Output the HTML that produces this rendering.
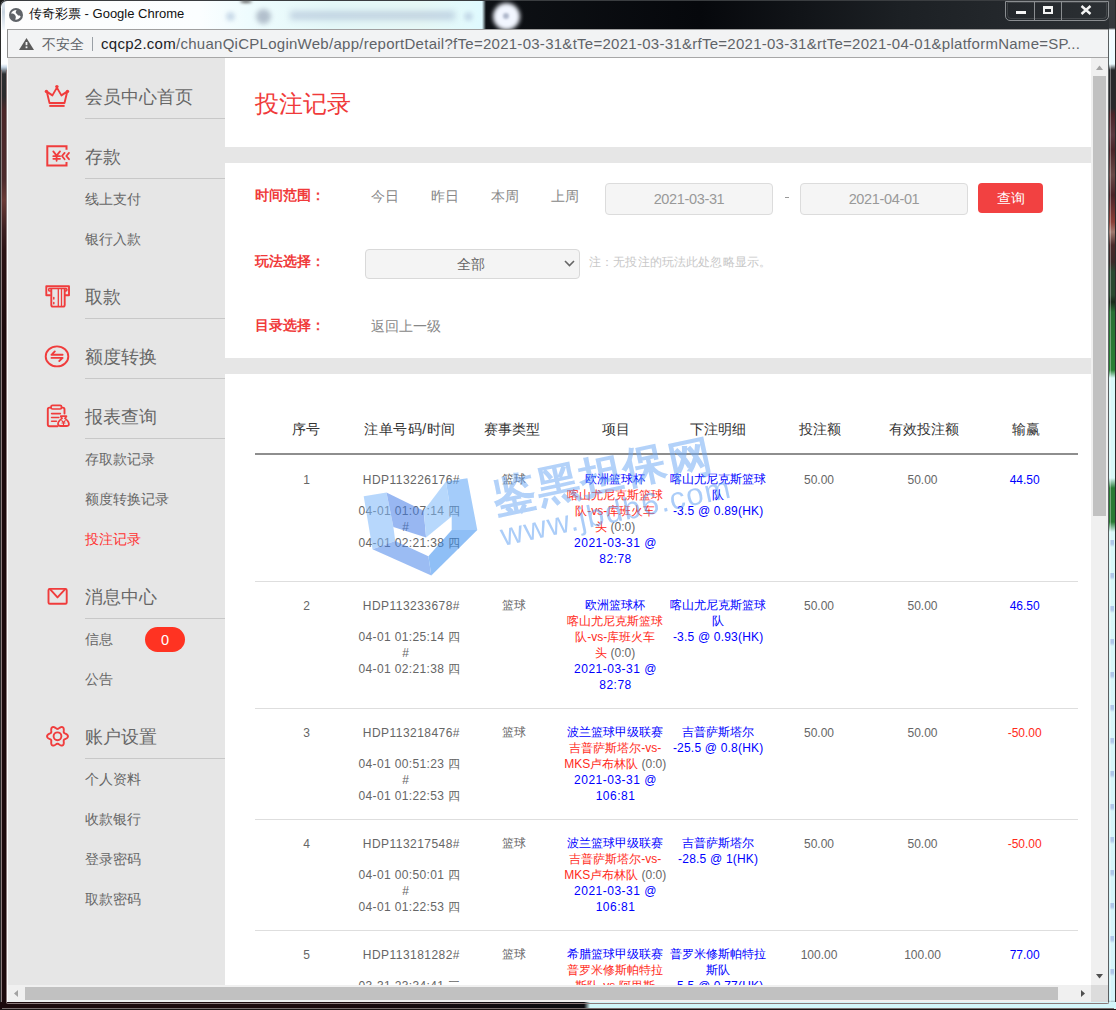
<!DOCTYPE html>
<html><head><meta charset="utf-8">
<style>
*{margin:0;padding:0;box-sizing:border-box}
html,body{width:1116px;height:1010px;overflow:hidden;background:#1a0c0c;font-family:"Liberation Sans",sans-serif}
.a{position:absolute;white-space:nowrap}
#titlebar{position:absolute;left:0;top:0;width:1116px;height:30px;overflow:hidden;background:linear-gradient(90deg,#fdfdfd 0,#fbfeff 200px,#eefcfe 250px,#e4f8f8 330px,#e6f8f6 420px,#e2fafd 470px,#dffaff 482px,#0e1115 486px,#06080c 700px,#1c2024 900px,#2c3034 1116px)}
#addr{position:absolute;left:7px;top:29px;width:1102px;height:29px;background:#f2f3f4;border-top:1px solid #a0a0a0;border-bottom:1px solid #a7a7a7;border-left:1px solid #8c8c8c}
#side{position:absolute;left:8px;top:58px;width:217px;height:927px;background:#e6e6e6}
#main{position:absolute;left:225px;top:58px;width:866px;height:927px;background:#fff;overflow:hidden}
.band{position:absolute;left:0;width:866px;height:16px;background:#e6e6e6}
.mi{position:absolute;left:77px;font-size:18px;color:#666;line-height:20px}
.sep{position:absolute;left:77px;width:140px;height:1px;background:#c8c8c8}
.si{position:absolute;left:77px;font-size:14px;color:#666;line-height:16px}
.lbl{font-size:14px;line-height:16px;color:#f03a3a;font-weight:bold}
.opt{font-size:14px;line-height:16px;color:#888}
.inp{width:168px;height:32px;border:1px solid #dcdcdc;border-radius:4px;background:#f5f5f5;font-size:14.5px;line-height:30px;color:#999;text-align:center;letter-spacing:-0.35px}
.th{top:421px;width:100px;text-align:center;font-size:14px;line-height:16px;color:#333}
.td{width:120px;text-align:center;font-size:12px;line-height:16px;color:#666}
.b{color:#0000ff}.r{color:#ff2a1a}.g{color:#666}
</style></head><body>
<div id="titlebar">
  <div class="a" style="left:0;top:0;width:1116px;height:1px;background:#3a3d40"></div>
  <div class="a" style="left:256px;top:9px;width:15px;height:15px;border-radius:50%;background:#8c98ac;filter:blur(2.5px);opacity:.6"></div>
  <div class="a" style="left:290px;top:11px;width:165px;height:9px;background:#9fb0cc;filter:blur(3px);opacity:.5"></div>
  <div class="a" style="left:226px;top:12px;width:9px;height:9px;border-radius:50%;background:#b8cce0;filter:blur(2px);opacity:.7"></div>
  <div class="a" style="left:464px;top:12px;width:9px;height:9px;border-radius:50%;background:#b8cce0;filter:blur(2px);opacity:.7"></div>
  <div class="a" style="left:240px;top:0;width:12px;height:3px;border-radius:50%;background:#555;filter:blur(1.5px)"></div>
  <div class="a" style="left:493px;top:3px;width:27px;height:27px;border-radius:50%;background:#f2f6ff;filter:blur(2.2px)"></div>
  <div class="a" style="left:503px;top:13px;width:6px;height:6px;border-radius:50%;background:#b0b8cc;filter:blur(1px)"></div>
  <svg class="a" style="left:8px;top:7px" width="16" height="16" viewBox="0 0 16 16"><circle cx="8" cy="8" r="7" fill="#5f6368"/><path d="M8.6 3 C6 3.2 3.6 4.6 3 6.6 C4.5 6.4 6 6.9 7 8 C8 9.2 8.2 10.4 7.2 12.6 C9.2 12.8 11.2 11.8 12.6 10 C12.8 9 11.5 8.2 10.2 8.6 C9.5 8 9.2 7 8.4 6.6 C7.6 6.2 7.4 5 8.6 3 Z" fill="#fff"/></svg>
  <div class="a" style="left:29px;top:6px;font-size:13px;line-height:16px;color:#111">传奇彩票 - Google Chrome</div>
  <div class="a" style="left:1005px;top:1px;width:104px;height:20px;border:1px solid #8a8d90;border-radius:0 0 5px 5px"></div><div class="a" style="left:1007px;top:2px;width:100px;height:17px;border:1px solid rgba(255,255,255,.12);border-radius:0 0 4px 4px"></div>
  <div class="a" style="left:1034px;top:1px;width:1px;height:19px;background:#8a8d90"></div>
  <div class="a" style="left:1061px;top:1px;width:1px;height:19px;background:#8a8d90"></div>
  <div class="a" style="left:1016px;top:11px;width:10px;height:3px;background:#f4f4f4"></div>
  <div class="a" style="left:1043px;top:6px;width:10px;height:8px;border:2px solid #f4f4f4;border-top-width:3px"></div>
  <svg class="a" style="left:1080px;top:5px" width="12" height="10" viewBox="0 0 12 10"><path d="M1.5 1 L10.5 9 M10.5 1 L1.5 9" stroke="#f4f4f4" stroke-width="2.4"/></svg>
</div>
<div id="addr">
  <svg class="a" style="left:11px;top:8px" width="15" height="12" viewBox="0 0 15 12"><path d="M7.5 0 L15 12 L0 12 Z" fill="#5a5a5a"/><rect x="6.6" y="4" width="1.8" height="3.2" fill="#f2f3f4"/><rect x="6.6" y="8.4" width="1.8" height="1.8" fill="#f2f3f4"/></svg>
  <div class="a" style="left:34px;top:6px;font-size:14px;line-height:16px;color:#5f6368">不安全</div>
  <div class="a" style="left:84px;top:7px;width:1px;height:14px;background:#9aa0a6"></div>
  <div class="a" style="left:93px;top:5px;font-size:15px;line-height:18px;color:#5f6368;letter-spacing:0.27px"><span style="color:#202124">cqcp2.com</span>/chuanQiCPLoginWeb/app/reportDetail?fTe=2021-03-31&amp;tTe=2021-03-31&amp;rfTe=2021-03-31&amp;rtTe=2021-04-01&amp;platformName=SP...</div>
</div>
<div id="side">
  <div class="mi" style="top:29px">会员中心首页</div>
  <div class="sep" style="top:60px"></div>
  <div class="mi" style="top:89px">存款</div>
  <div class="sep" style="top:120px"></div>
  <div class="si" style="top:133px">线上支付</div>
  <div class="si" style="top:173px">银行入款</div>
  <div class="mi" style="top:229px">取款</div>
  <div class="sep" style="top:260px"></div>
  <div class="mi" style="top:289px">额度转换</div>
  <div class="sep" style="top:320px"></div>
  <div class="mi" style="top:349px">报表查询</div>
  <div class="sep" style="top:380px"></div>
  <div class="si" style="top:393px">存取款记录</div>
  <div class="si" style="top:433px">额度转换记录</div>
  <div class="si" style="top:473px;color:#f33">投注记录</div>
  <div class="mi" style="top:529px">消息中心</div>
  <div class="sep" style="top:560px"></div>
  <div class="si" style="top:573px">信息</div>
  <div class="si" style="top:613px">公告</div>
  <div class="mi" style="top:669px">账户设置</div>
  <div class="sep" style="top:700px"></div>
  <div class="si" style="top:713px">个人资料</div>
  <div class="si" style="top:753px">收款银行</div>
  <div class="si" style="top:793px">登录密码</div>
  <div class="si" style="top:833px">取款密码</div>
</div>
<!--ICONS-->
<svg class="a" style="left:0;top:0" width="225" height="985">
<g fill="none" stroke="#f03c3c" stroke-width="1.9" stroke-linejoin="round" stroke-linecap="round">
 <!-- crown -->
 <path d="M47 92.5 L49.5 103 L64.5 103 L67 92.5 M46.8 91.6 L52.4 95.4 L56.9 87.6 L61.4 95.4 L67.1 91.6"/>
 <!-- deposit -->
 <path d="M66.5 149.8 L66.5 146.3 L47.3 146.3 L47.3 165.5 L66.5 165.5 L66.5 162" stroke-width="2" stroke-linecap="butt" stroke-linejoin="miter"/>
 <path d="M53.3 151.4 L56.6 155.6 L60 151.4 M56.6 155.6 L56.6 160.8 M53.3 156.2 L60 156.2 M53.3 158.8 L60 158.8" stroke-width="1.8"/>
 <path d="M64.6 152.9 L62 156 L64.6 159.2 M69 152.9 L66.3 156 L69 159.2" stroke-width="1.8"/>
 <!-- withdraw atm -->
 <path d="M50 295.3 L46.3 295.3 L46.3 286.3 L69 286.3 L69 295.3 L65.2 295.3" stroke-width="1.9"/>
 <path d="M50.5 291 L49.5 291 Q48.6 291 48.6 289.7 Q48.6 288.6 49.6 288.6 L65.8 288.6 Q67 288.6 67 289.7 Q67 291 65.8 291 L65 291" stroke-width="1.5"/>
 <path d="M51.3 289 L51.3 305 Q51.3 306.6 53 306.6 L63 306.6 Q64.7 306.6 64.7 305 L64.7 289" stroke-width="1.9"/>
 <path d="M58.3 289.5 L58.3 306 M61.5 289.5 L61.5 306" stroke-width="1.3"/>
 <path d="M53.8 297.6 L53.8 299 M53.8 302.4 L53.8 303.8" stroke-width="1.5"/>
 <!-- transfer -->
 <ellipse cx="57" cy="356.4" rx="11.3" ry="10"/>
 <path d="M51.5 354.8 L62.6 354.8 M51.5 354.8 L54.8 351.4 M51.5 357.9 L62.6 357.9 L59.3 361" stroke-width="1.9"/>
 <!-- report -->
 <path d="M50.8 407.6 L49.5 407.6 Q47.8 407.6 47.8 409.4 L47.8 424.6 Q47.8 426.2 49.5 426.2 L57.5 426.2 M64.5 413.5 L64.5 409.4 Q64.5 407.6 62.8 407.6 L61.6 407.6" stroke-width="1.9"/>
 <rect x="51" y="405.4" width="10.6" height="3.6" rx="1.6" stroke-width="1.7"/>
 <path d="M51.6 413.6 L60.4 413.6 M51.6 417.5 L58.8 417.5 M51.6 421.2 L56.4 421.2" stroke-width="1.6"/>
 <path d="M60.8 416.2 L62 418.4 Q57.8 421.5 58 424.2 Q58.3 426 60.5 426 L66.5 426 Q68.8 426 68.9 424.2 Q69 421.5 65 418.4 L66.4 416.2 Z" stroke-width="1.8"/>
 <path d="M61.8 420.6 L63.5 422.4 L65.2 420.6 M63.5 422.4 L63.5 424.6 M62 423 L65 423" stroke-width="1.2"/>
 <!-- mail -->
 <rect x="48.5" y="588.9" width="18.2" height="14.9" rx="1.3" stroke-width="1.9"/>
 <path d="M50 589.2 L57.5 597.4 L65.2 589.2" stroke-width="1.9"/>
 <!-- gear -->
 <path d="M67.95,736.30 L67.91,736.66 L67.79,737.02 L67.60,737.36 L67.34,737.68 L67.03,737.98 L66.67,738.25 L66.29,738.49 L65.90,738.71 L65.51,738.90 L65.14,739.08 L64.79,739.25 L64.48,739.41 L64.23,739.58 L64.02,739.77 L63.87,739.97 L63.76,740.21 L63.70,740.49 L63.69,740.79 L63.70,741.14 L63.72,741.52 L63.76,741.93 L63.79,742.37 L63.80,742.82 L63.78,743.27 L63.72,743.71 L63.62,744.13 L63.47,744.51 L63.27,744.85 L63.02,745.13 L62.73,745.35 L62.39,745.50 L62.02,745.57 L61.63,745.58 L61.22,745.51 L60.81,745.39 L60.40,745.22 L60.00,745.01 L59.61,744.78 L59.25,744.54 L58.91,744.30 L58.59,744.09 L58.30,743.90 L58.02,743.77 L57.76,743.68 L57.50,743.65 L57.24,743.68 L56.98,743.77 L56.70,743.90 L56.41,744.09 L56.09,744.30 L55.75,744.54 L55.39,744.78 L55.00,745.01 L54.60,745.22 L54.19,745.39 L53.78,745.51 L53.37,745.58 L52.98,745.57 L52.61,745.50 L52.28,745.35 L51.98,745.13 L51.73,744.85 L51.53,744.51 L51.38,744.13 L51.28,743.71 L51.22,743.27 L51.20,742.82 L51.21,742.37 L51.24,741.93 L51.28,741.52 L51.30,741.14 L51.31,740.79 L51.30,740.49 L51.24,740.21 L51.13,739.97 L50.98,739.77 L50.77,739.58 L50.52,739.41 L50.21,739.25 L49.86,739.08 L49.49,738.90 L49.10,738.71 L48.71,738.49 L48.33,738.25 L47.97,737.98 L47.66,737.68 L47.40,737.36 L47.21,737.02 L47.09,736.66 L47.05,736.30 L47.09,735.94 L47.21,735.58 L47.40,735.24 L47.66,734.92 L47.97,734.62 L48.33,734.35 L48.71,734.11 L49.10,733.89 L49.49,733.70 L49.86,733.52 L50.21,733.35 L50.52,733.19 L50.77,733.02 L50.98,732.83 L51.13,732.62 L51.24,732.39 L51.30,732.11 L51.31,731.81 L51.30,731.46 L51.28,731.08 L51.24,730.67 L51.21,730.23 L51.20,729.78 L51.22,729.33 L51.28,728.89 L51.38,728.47 L51.53,728.09 L51.73,727.75 L51.98,727.47 L52.27,727.25 L52.61,727.10 L52.98,727.03 L53.37,727.02 L53.78,727.09 L54.19,727.21 L54.60,727.38 L55.00,727.59 L55.39,727.82 L55.75,728.06 L56.09,728.30 L56.41,728.51 L56.70,728.70 L56.98,728.83 L57.24,728.92 L57.50,728.95 L57.76,728.92 L58.02,728.83 L58.30,728.70 L58.59,728.51 L58.91,728.30 L59.25,728.06 L59.61,727.82 L60.00,727.59 L60.40,727.38 L60.81,727.21 L61.22,727.09 L61.63,727.02 L62.02,727.03 L62.39,727.10 L62.73,727.25 L63.02,727.47 L63.27,727.75 L63.47,728.09 L63.62,728.47 L63.72,728.89 L63.78,729.33 L63.80,729.78 L63.79,730.23 L63.76,730.67 L63.72,731.08 L63.70,731.46 L63.69,731.81 L63.70,732.11 L63.76,732.39 L63.87,732.62 L64.02,732.83 L64.23,733.02 L64.48,733.19 L64.79,733.35 L65.14,733.52 L65.51,733.70 L65.90,733.89 L66.29,734.11 L66.67,734.35 L67.03,734.62 L67.34,734.92 L67.60,735.24 L67.79,735.58 L67.91,735.94 L67.95,736.30 Z" stroke-width="1.9"/>
 <circle cx="57.5" cy="736.3" r="3.9" stroke-width="1.9"/>
</g>
<circle cx="56.9" cy="86.6" r="1.7" fill="#f03c3c"/>
<circle cx="46.4" cy="91.4" r="1.7" fill="#f03c3c"/>
<circle cx="67.5" cy="91.4" r="1.7" fill="#f03c3c"/>
<rect x="49.3" y="104.9" width="15.3" height="2" fill="#f03c3c"/>
<rect x="145" y="627" width="40" height="25" rx="12.5" fill="#ff3322"/>
<text x="165" y="645" text-anchor="middle" font-size="14.5" fill="#fff" font-family="Liberation Sans, sans-serif">0</text>
</svg>
<!--/ICONS-->
<div id="main">
  <div class="band" style="top:89px"></div>
  <div class="band" style="top:300px"></div>
</div>
<div id="pg" style="position:absolute;left:0;top:0;width:1091px;height:985px;overflow:hidden">
  <div class="a" style="left:255px;top:90px;font-size:24px;line-height:28px;color:#f03a3a">投注记录</div>
  <div class="a lbl" style="left:255px;top:187px">时间范围：</div>
  <div class="a opt" style="left:371px;top:188px">今日</div>
  <div class="a opt" style="left:431px;top:188px">昨日</div>
  <div class="a opt" style="left:491px;top:188px">本周</div>
  <div class="a opt" style="left:551px;top:188px">上周</div>
  <div class="a inp" style="left:605px;top:183px">2021-03-31</div>
  <div class="a" style="left:785px;top:190px;width:4px;height:1px;background:#999;top:197px"></div>
  <div class="a inp" style="left:800px;top:183px">2021-04-01</div>
  <div class="a" style="left:978px;top:183px;width:65px;height:30px;background:#f24141;border-radius:4px;color:#fff;font-size:14px;line-height:30px;text-align:center">查询</div>
  <div class="a lbl" style="left:255px;top:253px">玩法选择：</div>
  <div class="a" style="left:365px;top:249px;width:215px;height:30px;border:1px solid #d9d9d9;border-radius:4px;background:#f4f4f4;font-size:14px;line-height:28px;color:#666;text-align:center;padding-right:4px">全部</div>
  <svg class="a" style="left:564px;top:260px" width="11" height="7" viewBox="0 0 11 7"><path d="M1 1 L5.5 5.5 L10 1" fill="none" stroke="#666" stroke-width="1.6"/></svg>
  <div class="a" style="left:589px;top:254px;font-size:12px;line-height:16px;color:#c8c8c8;letter-spacing:0.15px">注：无投注的玩法此处忽略显示。</div>
  <div class="a lbl" style="left:255px;top:317px">目录选择：</div>
  <div class="a opt" style="left:371px;top:318px">返回上一级</div>
  <div class="a" style="left:255px;top:453px;width:823px;height:2px;background:#8e8e8e"></div>
  <div class="a th" style="left:256px">序号</div>
  <div class="a th" style="left:360px;letter-spacing:0.45px">注单号码/时间</div>
  <div class="a th" style="left:462px">赛事类型</div>
  <div class="a th" style="left:566px">项目</div>
  <div class="a th" style="left:668px">下注明细</div>
  <div class="a th" style="left:770px">投注额</div>
  <div class="a th" style="left:874px">有效投注额</div>
  <div class="a th" style="left:976px">输赢</div>
<!--TBL-->
<div class="a td" style="left:246.5px;top:472px">1</div>
<div class="a td" style="left:351.4px;top:472px;letter-spacing:0.45px">HDP113226176#</div>
<div class="a td" style="left:349.4px;top:503px;letter-spacing:0.35px">04-01 01:07:14 四</div>
<div class="a td" style="left:345.7px;top:519px">#</div>
<div class="a td" style="left:349.4px;top:535px;letter-spacing:0.35px">04-01 02:21:38 四</div>
<div class="a td" style="left:453.6px;top:471px">篮球</div>
<div class="a td" style="left:555.2px;top:471px"><span class="b">欧洲篮球杯</span></div>
<div class="a td" style="left:555.2px;top:487px"><span class="r">喀山尤尼克斯篮球</span></div>
<div class="a td" style="left:555.2px;top:503px"><span class="r">队-vs-库班火车</span></div>
<div class="a td" style="left:555.2px;top:519px"><span class="r">头</span> (0:0)</div>
<div class="a td" style="left:555.5px;top:535px;letter-spacing:0.5px"><span class="b">2021-03-31 @</span></div>
<div class="a td" style="left:555.5px;top:551px;letter-spacing:0.5px"><span class="b">82:78</span></div>
<div class="a td" style="left:658.1px;top:471px"><span class="b">喀山尤尼克斯篮球</span></div>
<div class="a td" style="left:658.1px;top:487px"><span class="b">队</span></div>
<div class="a td" style="left:658.2px;top:503px;letter-spacing:0.2px"><span class="b">-3.5 @ 0.89(HK)</span></div>
<div class="a td" style="left:759.0px;top:472px">50.00</div>
<div class="a td" style="left:862.5px;top:472px">50.00</div>
<div class="a td" style="left:964.7px;top:472px"><span class="b">44.50</span></div>
<div class="a td" style="left:246.5px;top:598px">2</div>
<div class="a td" style="left:351.4px;top:598px;letter-spacing:0.45px">HDP113233678#</div>
<div class="a td" style="left:349.4px;top:629px;letter-spacing:0.35px">04-01 01:25:14 四</div>
<div class="a td" style="left:345.7px;top:645px">#</div>
<div class="a td" style="left:349.4px;top:661px;letter-spacing:0.35px">04-01 02:21:38 四</div>
<div class="a td" style="left:453.6px;top:597px">篮球</div>
<div class="a td" style="left:555.2px;top:597px"><span class="b">欧洲篮球杯</span></div>
<div class="a td" style="left:555.2px;top:613px"><span class="r">喀山尤尼克斯篮球</span></div>
<div class="a td" style="left:555.2px;top:629px"><span class="r">队-vs-库班火车</span></div>
<div class="a td" style="left:555.2px;top:645px"><span class="r">头</span> (0:0)</div>
<div class="a td" style="left:555.5px;top:661px;letter-spacing:0.5px"><span class="b">2021-03-31 @</span></div>
<div class="a td" style="left:555.5px;top:677px;letter-spacing:0.5px"><span class="b">82:78</span></div>
<div class="a td" style="left:658.1px;top:597px"><span class="b">喀山尤尼克斯篮球</span></div>
<div class="a td" style="left:658.1px;top:613px"><span class="b">队</span></div>
<div class="a td" style="left:658.2px;top:629px;letter-spacing:0.2px"><span class="b">-3.5 @ 0.93(HK)</span></div>
<div class="a td" style="left:759.0px;top:598px">50.00</div>
<div class="a td" style="left:862.5px;top:598px">50.00</div>
<div class="a td" style="left:964.7px;top:598px"><span class="b">46.50</span></div>
<div class="a td" style="left:246.5px;top:725px">3</div>
<div class="a td" style="left:351.4px;top:725px;letter-spacing:0.45px">HDP113218476#</div>
<div class="a td" style="left:349.4px;top:756px;letter-spacing:0.35px">04-01 00:51:23 四</div>
<div class="a td" style="left:345.7px;top:772px">#</div>
<div class="a td" style="left:349.4px;top:788px;letter-spacing:0.35px">04-01 01:22:53 四</div>
<div class="a td" style="left:453.6px;top:724px">篮球</div>
<div class="a td" style="left:555.2px;top:724px"><span class="b">波兰篮球甲级联赛</span></div>
<div class="a td" style="left:555.2px;top:740px"><span class="r">吉普萨斯塔尔-vs-</span></div>
<div class="a td" style="left:555.2px;top:756px"><span class="r">MKS卢布林队</span> (0:0)</div>
<div class="a td" style="left:555.5px;top:772px;letter-spacing:0.5px"><span class="b">2021-03-31 @</span></div>
<div class="a td" style="left:555.5px;top:788px;letter-spacing:0.5px"><span class="b">106:81</span></div>
<div class="a td" style="left:658.1px;top:724px"><span class="b">吉普萨斯塔尔</span></div>
<div class="a td" style="left:658.2px;top:740px;letter-spacing:0.2px"><span class="b">-25.5 @ 0.8(HK)</span></div>
<div class="a td" style="left:759.0px;top:725px">50.00</div>
<div class="a td" style="left:862.5px;top:725px">50.00</div>
<div class="a td" style="left:964.7px;top:725px"><span class="r">-50.00</span></div>
<div class="a td" style="left:246.5px;top:836px">4</div>
<div class="a td" style="left:351.4px;top:836px;letter-spacing:0.45px">HDP113217548#</div>
<div class="a td" style="left:349.4px;top:867px;letter-spacing:0.35px">04-01 00:50:01 四</div>
<div class="a td" style="left:345.7px;top:883px">#</div>
<div class="a td" style="left:349.4px;top:899px;letter-spacing:0.35px">04-01 01:22:53 四</div>
<div class="a td" style="left:453.6px;top:835px">篮球</div>
<div class="a td" style="left:555.2px;top:835px"><span class="b">波兰篮球甲级联赛</span></div>
<div class="a td" style="left:555.2px;top:851px"><span class="r">吉普萨斯塔尔-vs-</span></div>
<div class="a td" style="left:555.2px;top:867px"><span class="r">MKS卢布林队</span> (0:0)</div>
<div class="a td" style="left:555.5px;top:883px;letter-spacing:0.5px"><span class="b">2021-03-31 @</span></div>
<div class="a td" style="left:555.5px;top:899px;letter-spacing:0.5px"><span class="b">106:81</span></div>
<div class="a td" style="left:658.1px;top:835px"><span class="b">吉普萨斯塔尔</span></div>
<div class="a td" style="left:658.2px;top:851px;letter-spacing:0.2px"><span class="b">-28.5 @ 1(HK)</span></div>
<div class="a td" style="left:759.0px;top:836px">50.00</div>
<div class="a td" style="left:862.5px;top:836px">50.00</div>
<div class="a td" style="left:964.7px;top:836px"><span class="r">-50.00</span></div>
<div class="a td" style="left:246.5px;top:947px">5</div>
<div class="a td" style="left:351.4px;top:947px;letter-spacing:0.45px">HDP113181282#</div>
<div class="a td" style="left:349.4px;top:978px;letter-spacing:0.35px">03-31 23:34:41 三</div>
<div class="a td" style="left:345.7px;top:994px">#</div>
<div class="a td" style="left:349.4px;top:1010px;letter-spacing:0.35px">03-31 23:44:41 三</div>
<div class="a td" style="left:453.6px;top:946px">篮球</div>
<div class="a td" style="left:555.2px;top:946px"><span class="b">希腊篮球甲级联赛</span></div>
<div class="a td" style="left:555.2px;top:962px"><span class="r">普罗米修斯帕特拉</span></div>
<div class="a td" style="left:555.2px;top:978px"><span class="r">斯队-vs-阿里斯</span></div>
<div class="a td" style="left:555.5px;top:994px;letter-spacing:0.5px"><span class="b">2021-03-31 @</span></div>
<div class="a td" style="left:658.1px;top:946px"><span class="b">普罗米修斯帕特拉</span></div>
<div class="a td" style="left:658.1px;top:962px"><span class="b">斯队</span></div>
<div class="a td" style="left:658.2px;top:978px;letter-spacing:0.2px"><span class="b">-5.5 @ 0.77(HK)</span></div>
<div class="a td" style="left:759.0px;top:947px">100.00</div>
<div class="a td" style="left:862.5px;top:947px">100.00</div>
<div class="a td" style="left:964.7px;top:947px"><span class="b">77.00</span></div>
<div class="a" style="left:255px;top:581px;width:823px;height:1px;background:#dedede"></div>
<div class="a" style="left:255px;top:708px;width:823px;height:1px;background:#dedede"></div>
<div class="a" style="left:255px;top:819px;width:823px;height:1px;background:#dedede"></div>
<div class="a" style="left:255px;top:930px;width:823px;height:1px;background:#dedede"></div>
<!--/TBL-->
<!--WM-->
<svg class="a" style="left:0;top:0" width="1091" height="985">
<g opacity="0.55">
<polygon points="363.7,496.2 386.5,492.4 393.4,527.1 395.2,541.1 372.5,549.2" fill="#7eb8fa"/>
<polygon points="386.5,492.4 423.7,510.8 426.1,537.6 393.4,527.1" fill="#447ee8"/>
<polygon points="423.7,510.8 445.9,481.6 451.7,516.6 426.1,537.6" fill="#7ebafa"/>
<polygon points="445.9,481.6 467.4,478.2 477.3,530 451.7,530 451.7,516.6" fill="#5ba4f6"/>
<polygon points="372.5,549.2 395.2,541.1 428.4,556.2 431.3,575.4" fill="#4a86ea"/>
<polygon points="428.4,556.2 451.7,530 477.3,530 431.3,575.4" fill="#358cef"/>
</g>
<text x="514.5" y="509.1" text-anchor="middle" transform="rotate(-12 514.5 494.6)" font-size="43" fill="#6aa6f4" stroke="#6aa6f4" stroke-width="1.6" opacity="0.5" font-family="Liberation Sans, sans-serif">鉴</text>
<text x="558" y="499.3" text-anchor="middle" transform="rotate(-12 558 484.8)" font-size="43" fill="#6aa6f4" stroke="#6aa6f4" stroke-width="1.6" opacity="0.5" font-family="Liberation Sans, sans-serif">黑</text>
<text x="601" y="489.5" text-anchor="middle" transform="rotate(-12 601 475)" font-size="43" fill="#6aa6f4" stroke="#6aa6f4" stroke-width="1.6" opacity="0.5" font-family="Liberation Sans, sans-serif">担</text>
<text x="644" y="480.2" text-anchor="middle" transform="rotate(-12 644 465.7)" font-size="43" fill="#6aa6f4" stroke="#6aa6f4" stroke-width="1.6" opacity="0.5" font-family="Liberation Sans, sans-serif">保</text>
<text x="690.4" y="473.4" text-anchor="middle" transform="rotate(-12 690.4 458.9)" font-size="43" fill="#6aa6f4" stroke="#6aa6f4" stroke-width="1.6" opacity="0.5" font-family="Liberation Sans, sans-serif">网</text>
<text x="503" y="546" transform="rotate(-12 503 546)" font-size="31" letter-spacing="1.4" fill="#5a9cf2" opacity="0.5" font-family="Liberation Sans, sans-serif">www.jbdb6.com</text>
</svg>
<!--/WM-->
</div>

<div class="a" style="left:0;top:0;width:1px;height:1010px;background:#2a2a2a"></div>
<div class="a" style="left:1px;top:30px;width:6px;height:973px;background:linear-gradient(180deg,#ffffff 0,#fbfdff 34px,#c8d8e8 37px,#2c2e30 44px,#2a2a2c 66px,#4a2628 80px,#4c2a2c 150px,#6a3a36 170px,#3a1e20 200px,#2a1214 220px,#1c0a0c 300px,#1c0a0c 973px)"></div>
<div class="a" style="left:1px;top:70px;width:1px;height:935px;background:#8a7a7a"></div>
<div class="a" style="left:6px;top:70px;width:1px;height:933px;background:#8a7a7a"></div>
<div class="a" style="left:2px;top:0;width:3px;height:30px;background:linear-gradient(180deg,#e8eef4,#c8d4e0 40%,#f4f8fc)"></div>
<div class="a" style="left:0;top:0;width:8px;height:8px;border-top-left-radius:7px;border-left:1px solid #3a3d40;border-top:1px solid #3a3d40;box-shadow:-3px -3px 0 0 #1a1a1a"></div>
<div class="a" style="left:7px;top:58px;width:1px;height:944px;background:#fcfcfc"></div>
<div class="a" style="left:1108px;top:29px;width:1px;height:974px;background:#5a5e60"></div>
<div class="a" style="left:1109px;top:0;width:7px;height:1010px;background:linear-gradient(180deg,#3a3d40 0,#34383c 28px,#f4fcff 30px,#eafcff 64px,#282a2c 70px,#2a2a2c 108px,#4a2428 114px,#5a3a40 135px,#4a2428 150px,#6a4a48 175px,#4a2428 195px,#8a4038 222px,#a07a70 232px,#4a2a2a 245px,#3a2a28 262px,#2a4a32 272px,#2a4a30 295px,#1a2a1a 302px,#2a7035 312px,#2a8035 370px,#d8f8f8 378px,#d8f8f8 478px,#2a7a35 488px,#2a7a35 522px,#d8f8f8 532px,#d4f4fa 1000px,#2a2a2a 1008px)"></div>
<div class="a" style="left:1110px;top:540px;width:4px;height:460px;background:repeating-linear-gradient(180deg,rgba(140,160,220,.55) 0,rgba(140,160,220,.55) 4px,rgba(0,0,0,0) 7px,rgba(0,0,0,0) 33px);filter:blur(0.6px)"></div>
<div class="a" style="left:1115px;top:0;width:1px;height:1010px;background:#2a2a2a"></div>
<div class="a" style="left:1110px;top:30px;width:1px;height:975px;background:rgba(255,255,255,.35)"></div>
<div class="a" style="left:0;top:1002px;width:1116px;height:8px;background:linear-gradient(90deg,#1c0a0c 0,#1c0a0c 300px,#0c0c10 560px,#0c0c10 584px,#d0f6f8 590px,#d4f6fa 1116px)"></div>
<div class="a" style="left:6px;top:1002px;width:1103px;height:2px;border:1px solid #8a7a7a;border-top:none;border-radius:0 0 3px 3px;background:transparent"></div>
<div class="a" style="left:2px;top:1008px;width:1112px;height:1px;background:#7a7070"></div>
<div class="a" style="left:0;top:1009px;width:1116px;height:1px;background:#1a1414"></div>
<!-- vertical scrollbar -->
<div class="a" style="left:1091px;top:58px;width:17px;height:927px;background:#f0f0f0"></div>
<div class="a" style="left:1093px;top:76px;width:13px;height:440px;background:#c1c1c1"></div>
<svg class="a" style="left:1095px;top:65px" width="9" height="6" viewBox="0 0 9 6"><path d="M4.5 0.5 L8 5 L1 5 Z" fill="#a3a3a3"/></svg>
<svg class="a" style="left:1095px;top:973px" width="9" height="6" viewBox="0 0 9 6"><path d="M1 1 L8 1 L4.5 5.5 Z" fill="#505050"/></svg>
<!-- horizontal scrollbar -->
<div class="a" style="left:8px;top:985px;width:1083px;height:17px;background:#f0f0f0"></div>
<div class="a" style="left:25px;top:987px;width:1033px;height:13px;background:#c1c1c1"></div>
<svg class="a" style="left:13px;top:989px" width="6" height="9" viewBox="0 0 6 9"><path d="M1 4.5 L5 1 L5 8 Z" fill="#a3a3a3"/></svg>
<svg class="a" style="left:1080px;top:989px" width="6" height="9" viewBox="0 0 6 9"><path d="M1 1 L5 4.5 L1 8 Z" fill="#505050"/></svg>
<div class="a" style="left:1091px;top:985px;width:17px;height:17px;background:#dcdcdc"></div>
</body></html>
